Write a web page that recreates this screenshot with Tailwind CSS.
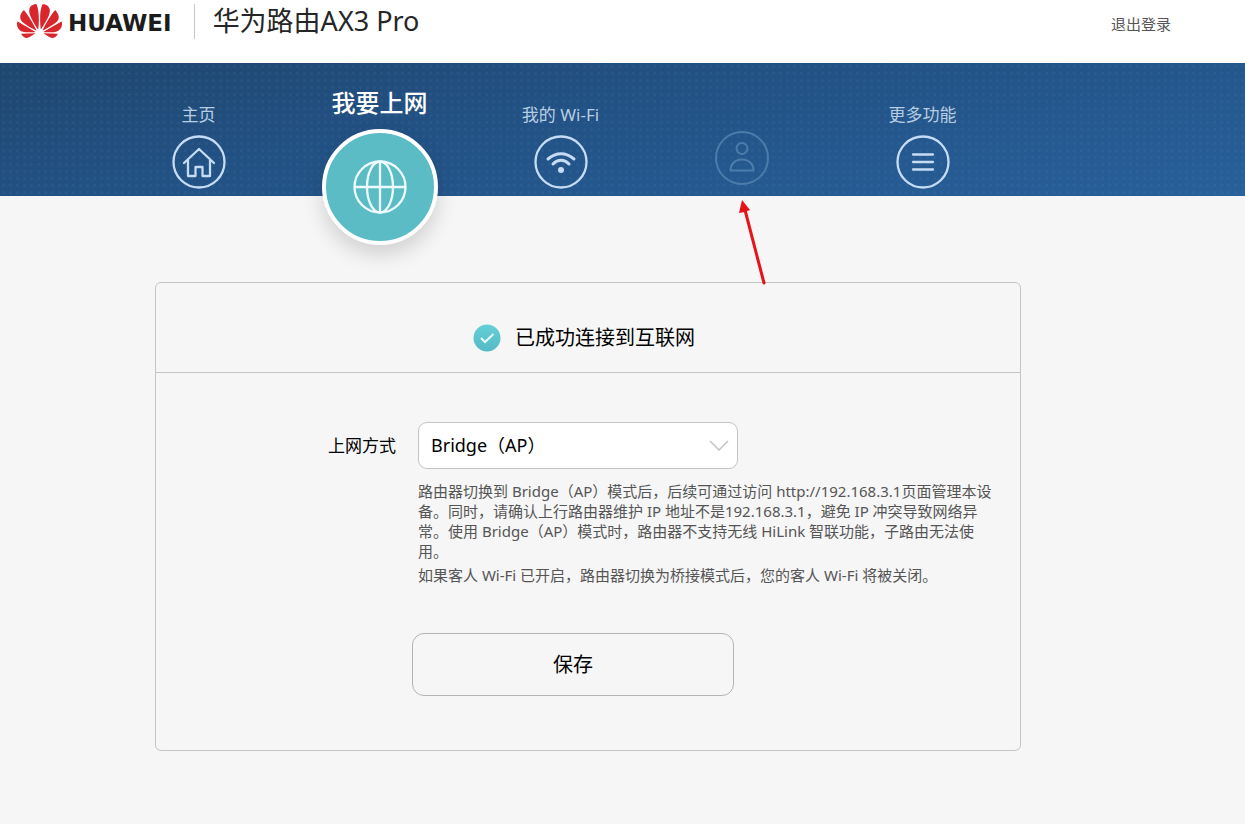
<!DOCTYPE html>
<html lang="zh-CN">
<head>
    <meta charset="UTF-8">
    <meta name="viewport" content="width=device-width, initial-scale=1.0">
    <title>华为路由AX3 Pro</title>
    <script src="https://cdn.jsdelivr.net/npm/@tailwindcss/browser@4"></script>
    <style>
        body {
            font-family: 'Noto Sans', 'Noto Sans CJK SC', sans-serif;
        }
        /* Faint dot pattern over the blue gradient */
        .nav-bar {
            background:
                radial-gradient(circle, rgba(120, 175, 215, 0.07) 1px, transparent 2px) 0 0 / 7px 7px,
                linear-gradient(170deg, #1f476f 0%, #225184 40%, #28609a 100%);
        }
    </style>
</head>
<body class="min-h-screen bg-[#f6f6f6] text-black">

    <!-- Header -->
    <header class="flex h-[63px] items-start bg-white pl-[17px] pr-[74px]">
        <div class="flex h-[42px] items-center">
            <svg class="h-[34px] w-[45px]" viewBox="0 2.9 24 18.2" fill="#d8262c" preserveAspectRatio="none" aria-hidden="true">
                <path d="M3.67 6.14S1.82 7.91 1.72 9.78v.35c.08 1.51 1.22 2.4 1.22 2.4 1.83 1.79 6.26 4.04 7.3 4.55 0 0 .06.03.1-.01l.02-.04v-.04C7.52 10.8 3.67 6.14 3.67 6.14zM9.65 18.6c-.02-.08-.1-.08-.1-.08l-7.38.26c.8 1.43 2.15 2.53 3.56 2.2.96-.25 3.16-1.78 3.88-2.3.06-.05.04-.09.04-.09zm.08-.78C6.49 15.63.21 12.28.21 12.28c-.15.46-.2.9-.21 1.3v.07c0 1.07.4 1.82.4 1.82.8 1.69 2.34 2.2 2.34 2.2.7.3 1.4.31 1.4.31.12.02 4.4 0 5.54 0 .05 0 .08-.05.08-.05v-.06c0-.03-.03-.05-.03-.05zM9.06 3.19a3.42 3.42 0 00-2.57 3.15v.41c.03.6.16 1.05.16 1.05.66 2.9 3.86 7.65 4.55 8.65.05.05.1.03.1.03a.1.1 0 00.06-.1c1.06-10.6-1.11-13.42-1.11-13.42-.32.02-1.19.23-1.19.23zm8.3 2.27s-.49-1.8-2.44-2.28c0 0-.57-.14-1.17-.22 0 0-2.18 2.81-1.12 13.43.01.07.06.08.06.08.07.03.1-.03.1-.03.72-1.03 3.9-5.76 4.55-8.64 0 0 .36-1.4.02-2.34zm-2.92 13.07s-.07 0-.09.05c0 0-.01.07.03.1.7.51 2.85 2 3.88 2.3 0 0 .16.05.43.06h.14c.69-.02 1.9-.37 3-2.26l-7.4-.25zm7.83-8.41c.14-2.06-1.94-3.97-1.94-3.98 0 0-3.85 4.66-6.67 10.8 0 0-.03.08.02.13l.04.01h.06c1.06-.53 5.46-2.77 7.28-4.54 0 0 1.15-.93 1.21-2.42zm1.52 2.14s-6.28 3.37-9.52 5.55c0 0-.05.04-.03.11 0 0 .03.06.07.06 1.16 0 5.56 0 5.67-.02 0 0 .57-.02 1.27-.29 0 0 1.56-.5 2.37-2.27 0 0 .73-1.45.17-3.14z"/>
            </svg>
            <span class="ml-[6px] pt-1 font-['DejaVu_Sans'] text-[23px] font-bold leading-8 text-[#1c1c1c]">HUAWEI</span>
            <span class="ml-[22px] h-[35px] w-px bg-[#c8c8c8]"></span>
            <h1 class="ml-[18px] text-[27px] leading-10 text-[#262626]">华为路由AX3 Pro</h1>
        </div>
        <a href="#" class="ml-auto mt-3 text-[15px] leading-6 text-[#555]">退出登录</a>
    </header>

    <!-- Navigation -->
    <nav class="nav-bar grid h-[133px] grid-cols-5 pl-[108px] pr-[232px] text-[17px] text-[#b9cde2]">
        <a href="#" class="flex flex-col items-center gap-2 pt-10">
            <span class="leading-6">主页</span>
            <svg class="size-[54px]" viewBox="0 0 54 54" fill="none" stroke="#c6dcf5" stroke-width="2.300" aria-hidden="true">
                <circle cx="27" cy="27" r="25.500"/>
                <path d="M12 28 27 14l15 14M16 25v16h7.500v-9h7v9H38V25" stroke-linejoin="round" stroke-linecap="round"/>
            </svg>
        </a>
        <a href="#" class="flex flex-col items-center gap-2 pt-[22px]" aria-current="page">
            <span class="text-[24px] font-medium leading-9 text-white">我要上网</span>
            <span class="flex size-[116px] shrink-0 items-center justify-center rounded-full border-4 border-white bg-[#5bbcc6] shadow-[0_10px_20px_rgba(0,0,0,0.15)]">
                <svg class="size-[54px]" viewBox="0 0 54 54" fill="none" stroke="#effcff" stroke-width="2.300" aria-hidden="true">
                    <circle cx="27" cy="27" r="25.500"/>
                    <ellipse cx="27" cy="27" rx="13" ry="25.500"/>
                    <path d="M27 1v52M1 27h52"/>
                </svg>
            </span>
        </a>
        <a href="#" class="flex flex-col items-center gap-2 pt-10">
            <span class="leading-6">我的 Wi-Fi</span>
            <svg class="size-[54px]" viewBox="0 0 54 54" fill="none" stroke="#c6dcf5" stroke-width="2.300" aria-hidden="true">
                <circle cx="27" cy="27" r="25.500"/>
                <path d="M14 24c8-7 18-7 26 0M19 29c5-5 11-5 16 0" stroke-width="3" stroke-linecap="round"/>
                <circle cx="27" cy="35" r="3" fill="#c6dcf5" stroke="none"/>
            </svg>
        </a>
        <a href="#" class="relative flex flex-col items-center pt-[68px]" aria-label="设备">
            <svg class="size-[54px]" viewBox="0 0 54 54" fill="none" stroke="#4d7cab" stroke-width="2" aria-hidden="true">
                <circle cx="27" cy="27" r="26"/>
                <circle cx="27" cy="17.500" r="5.500"/>
                <path d="M15.500 39.500c0-6 4-11 11.500-11s11.500 5 11.500 11z" stroke-linejoin="round"/>
            </svg>
            <!-- Pointer arrow -->
            <svg class="absolute left-1/2 top-[137px] h-[86px] w-9 -translate-x-2" viewBox="0 0 36 86" aria-hidden="true">
                <path d="M11 10 30 83" stroke="#e8131a" stroke-width="3" stroke-linecap="round"/>
                <path d="M8 0 5 13l6-1 5-2z" fill="#e8131a"/>
            </svg>
        </a>
        <a href="#" class="flex flex-col items-center gap-2 pt-10">
            <span class="leading-6">更多功能</span>
            <svg class="size-[54px]" viewBox="0 0 54 54" fill="none" stroke="#c6dcf5" stroke-width="2.300" aria-hidden="true">
                <circle cx="27" cy="27" r="25.500"/>
                <path d="M17 19.500h20M17 27h20M17 34.500h20" stroke-linecap="round"/>
            </svg>
        </a>
    </nav>

    <!-- Internet settings -->
    <main class="pb-[72px] pl-[155px] pr-[224px] pt-[86px]">
        <section class="rounded-md border border-[#c4c4c4]">
            <div class="flex h-[90px] items-center justify-center gap-[14px] border-b border-[#c4c4c4] pr-2 pt-5">
                <svg class="size-7" viewBox="0 0 28 28" fill="none" aria-hidden="true">
                    <defs>
                        <linearGradient id="tick" x1="0" y1="0" x2="0" y2="1">
                            <stop offset="0" stop-color="#66cfd8"/>
                            <stop offset="1" stop-color="#55bac4"/>
                        </linearGradient>
                    </defs>
                    <circle cx="14" cy="14" r="13.500" fill="url(#tick)"/>
                    <path d="m8 14 4 4 8.500-8" stroke="#e8fbfd" stroke-width="2"/>
                </svg>
                <h2 class="text-[20px] leading-7">已成功连接到互联网</h2>
            </div>

            <form class="grid grid-cols-[240px_1fr] gap-x-[22px] pb-[54px] pr-[18px] pt-[49px]">
                <label for="mode" class="text-right text-[17px] leading-[47px]">上网方式</label>
                <div>
                    <div class="relative w-80">
                        <select id="mode" class="h-[47px] w-full appearance-none rounded-[9px] border border-[#c4c4c4] bg-white px-3 text-[18px] text-black">
                            <option>Bridge（AP）</option>
                        </select>
                        <svg class="pointer-events-none absolute right-[9px] top-[18px] h-[11px] w-5" viewBox="0 0 20 11" fill="none" stroke="#c4c4c4" stroke-width="1.500" aria-hidden="true">
                            <path d="m1 1 9 9 9-9"/>
                        </svg>
                    </div>
                    <div class="mt-3 text-[15px] leading-5 text-[#555]">
                        <p>路由器切换到 Bridge（AP）模式后，后续可通过访问 http://192.168.3.1页面管理本设备。同时，请确认上行路由器维护 IP 地址不是192.168.3.1，避免 IP 冲突导致网络异常。使用 Bridge（AP）模式时，路由器不支持无线 HiLink 智联功能，子路由无法使用。</p>
                        <p class="mt-1">如果客人 Wi-Fi 已开启，路由器切换为桥接模式后，您的客人 Wi-Fi 将被关闭。</p>
                    </div>
                </div>
                <button type="button" class="col-span-2 ml-64 mt-12 h-[63px] w-[322px] rounded-xl border border-[#b4b4b4] text-[20px]">保存</button>
            </form>
        </section>
    </main>
</body>
</html>
